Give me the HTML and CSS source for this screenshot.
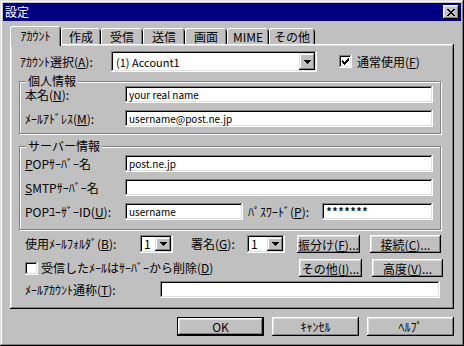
FILE: index.html
```html
<!DOCTYPE html>
<html lang="ja">
<head>
<meta charset="utf-8">
<title>設定</title>
<link rel="stylesheet" href="styles.css">
</head>
<body>
<div class="window">
  <div class="titlebar">
    <span class="title">設定</span>
    <span class="close"><svg width="8" height="7" viewBox="0 0 8 7" shape-rendering="crispEdges"><path d="M0 0h2v1h-2zM6 0h2v1h-2zM1 1h2v1h-2zM5 1h2v1h-2zM2 2h4v1h-4zM3 3h2v1h-2zM2 4h4v1h-4zM1 5h2v1h-2zM5 5h2v1h-2zM0 6h2v1h-2zM6 6h2v1h-2z" fill="#000"/></svg></span>
  </div>
  <div class="body">
    <div class="tabs">
      <div class="tab active">ｱｶｳﾝﾄ</div>
      <div class="tab w40">作成</div>
      <div class="tab w42">受信</div>
      <div class="tab w42">送信</div>
      <div class="tab w42">画面</div>
      <div class="tab w42">MIME</div>
      <div class="tab w46">その他</div>
    </div>
    <div class="panel">
      <div class="row row-acct">
        <span class="l-acct">ｱｶｳﾝﾄ選択(<u>A</u>):</span>
        <div class="combo c-acct"><span class="val">(1) Account1</span><span class="drop"><svg width="7" height="4" viewBox="0 0 7 4" shape-rendering="crispEdges"><path d="M0 0h7v1h-1v1h-1v1h-1v1h-1v-1h-1v-1h-1v-1h-1z" fill="#000"/></svg></span></div>
        <span class="check c-normal"><svg width="7" height="7" viewBox="0 0 7 7" shape-rendering="crispEdges"><path d="M6 0h1v1h-1zM5 1h2v1h-2zM0 2h1v1h-1zM4 2h3v1h-3zM0 3h2v1h-2zM3 3h3v1h-3zM0 4h5v1h-5zM1 5h3v1h-3zM2 6h1v1h-1z" fill="#000"/></svg></span>
        <span class="chklbl">通常使用(<u>F</u>)</span>
      </div>

      <div class="group g1">
        <span class="legend">個人情報</span>
        <div class="grow"><span class="glbl">本名(<u>N</u>):</span><div class="edit">your real name</div></div>
        <div class="grow"><span class="glbl">ﾒｰﾙｱﾄﾞﾚｽ(<u>M</u>):</span><div class="edit">username@post.ne.jp</div></div>
      </div>

      <div class="group g2">
        <span class="legend">サーバー情報</span>
        <div class="grow"><span class="glbl"><u>P</u>OPｻｰﾊﾞｰ名</span><div class="edit">post.ne.jp</div></div>
        <div class="grow"><span class="glbl"><u>S</u>MTPｻｰﾊﾞｰ名</span><div class="edit"></div></div>
        <div class="grow"><span class="glbl">POPﾕｰｻﾞｰID(<u>U</u>):</span><div class="edit e-user">username</div><span class="plbl">ﾊﾟｽﾜｰﾄﾞ(<u>P</u>):</span><div class="edit e-pass">*******</div></div>
      </div>

      <div class="row row-folder">
        <span class="l-folder">使用ﾒｰﾙﾌｫﾙﾀﾞ(<u>B</u>):</span>
        <div class="combo c-small c-folder"><span class="val">1</span><span class="drop"><svg width="7" height="4" viewBox="0 0 7 4" shape-rendering="crispEdges"><path d="M0 0h7v1h-1v1h-1v1h-1v1h-1v-1h-1v-1h-1v-1h-1z" fill="#000"/></svg></span></div>
        <span class="l-sign">署名(<u>G</u>):</span>
        <div class="combo c-small c-sign"><span class="val">1</span><span class="drop"><svg width="7" height="4" viewBox="0 0 7 4" shape-rendering="crispEdges"><path d="M0 0h7v1h-1v1h-1v1h-1v1h-1v-1h-1v-1h-1v-1h-1z" fill="#000"/></svg></span></div>
        <span class="btn b-left">振分け(<u>F</u>)...</span>
        <span class="btn b-right">接続(<u>C</u>)...</span>
      </div>

      <div class="row row-opts">
        <span class="check c-delete"></span>
        <span class="l-delete">受信したﾒｰﾙはｻｰﾊﾞｰから削除(<u>D</u>)</span>
        <span class="spacer"></span>
        <span class="btn b-left2">その他(<u>I</u>)...</span>
        <span class="btn b-right">高度(<u>V</u>)...</span>
      </div>

      <div class="row row-alias">
        <span class="l-alias">ﾒｰﾙｱｶｳﾝﾄ通称(<u>T</u>):</span>
        <div class="edit e-alias"></div>
      </div>
    </div>

    <div class="buttons">
      <span class="btn big default">OK</span>
      <span class="btn big">ｷｬﾝｾﾙ</span>
      <span class="btn big">ﾍﾙﾌﾟ</span>
    </div>
  </div>
</div>
</body>
</html>
```

FILE: styles.css
```css
html, body {
  margin: 0;
  padding: 0;
  background: #c0c0c0;
}
body {
  font: 12px/14px "Noto Sans CJK JP", "Noto Sans", sans-serif;
  color: #000;
}
u {
  text-decoration: underline;
  text-underline-offset: 1px;
}

.window {
  width: 464px;
  height: 346px;
  box-sizing: border-box;
  padding: 3px;
  background: #c0c0c0;
  box-shadow: inset -1px -1px #000, inset 1px 1px #dfdfdf, inset -2px -2px #808080, inset 2px 2px #fff;
  display: flex;
  flex-direction: column;
}

.titlebar {
  height: 18px;
  background: #000080;
  color: #fff;
  display: flex;
  align-items: center;
  padding: 0 2px;
}
.title {
  flex: 1;
}
.close {
  width: 16px;
  height: 14px;
  box-sizing: border-box;
  background: #c0c0c0;
  box-shadow: inset -1px -1px #000, inset 1px 1px #fff, inset -2px -2px #808080, inset 2px 2px #dfdfdf;
  display: flex;
  align-items: center;
  justify-content: center;
  padding-right: 1px;
}

.body {
  padding: 5px 7px 0 7px;
  display: flex;
  flex-direction: column;
}

.tabs {
  display: flex;
  align-items: flex-end;
  height: 20px;
  margin-bottom: -2px;
  position: relative;
  z-index: 1;
}
.tab {
  height: 16px;
  margin-bottom: 2px;
  box-sizing: border-box;
  display: flex;
  align-items: center;
  justify-content: center;
  background: #c0c0c0;
  border-radius: 3px 3px 0 0;
  box-shadow: inset 1px 0 #fff, inset 0 1px #fff, inset -1px 0 #000, inset -2px 0 #808080;
  padding-top: 1px;
}
.tab.active {
  width: 51px;
  height: 20px;
  margin-bottom: 0;
  padding-bottom: 2px;
}
.w40 { width: 40px; }
.w42 { width: 42px; }
.w46 { width: 46px; }

.panel {
  height: 265px;
  box-sizing: border-box;
  padding: 7px 11px 7px 9px;
  box-shadow: inset -1px -1px #000, inset 1px 1px #fff, inset -2px -2px #808080, inset 2px 2px #dfdfdf;
  display: flex;
  flex-direction: column;
}

.row {
  display: flex;
  align-items: center;
}
.row-acct {
  height: 21px;
}
.l-acct {
  width: 91px;
  margin-left: 1px;
}

.combo {
  box-sizing: border-box;
  background: #fff;
  box-shadow: inset -1px -1px #fff, inset 1px 1px #808080, inset -2px -2px #dfdfdf, inset 2px 2px #000;
  display: flex;
  align-items: stretch;
  padding: 2px;
}
.combo .val {
  flex: 1;
  padding-left: 2px;
  display: flex;
  align-items: center;
}
.c-acct .val {
  font-size: 11px;
  padding-left: 3px;
}
.drop {
  width: 16px;
  box-sizing: border-box;
  background: #c0c0c0;
  box-shadow: inset -1px -1px #000, inset 1px 1px #dfdfdf, inset -2px -2px #808080, inset 2px 2px #fff;
  display: flex;
  align-items: center;
  justify-content: center;
}
.c-acct {
  width: 206px;
  height: 21px;
}
.c-small {
  height: 18px;
}
.c-folder { width: 33px; }
.c-sign { width: 38px; }

.check {
  width: 13px;
  height: 13px;
  box-sizing: border-box;
  background: #fff;
  box-shadow: inset -1px -1px #fff, inset 1px 1px #808080, inset -2px -2px #dfdfdf, inset 2px 2px #000;
  display: flex;
  align-items: center;
  justify-content: center;
}
.c-normal {
  margin-left: 22px;
}
.chklbl {
  margin-left: 5px;
}

.group {
  position: relative;
  box-sizing: border-box;
  border: 1px solid #808080;
  box-shadow: 1px 1px 0 #fff, inset 1px 1px 0 #fff;
  margin-right: 2px;
  display: flex;
  flex-direction: column;
  gap: 7px;
}
.g1 {
  margin-top: 9px;
  padding: 4px 7px 6px 5px;
}
.g2 {
  margin-top: 12px;
  padding: 8px 7px 9px 5px;
}
.legend {
  position: absolute;
  top: -7px;
  left: 6px;
  padding: 0 2px;
  background: #c0c0c0;
  line-height: 12px;
}
.grow {
  display: flex;
  align-items: center;
  height: 17px;
}
.glbl {
  width: 100px;
  flex: none;
}
.edit {
  flex: 1;
  height: 17px;
  box-sizing: border-box;
  background: #fff;
  box-shadow: inset -1px -1px #fff, inset 1px 1px #808080, inset -2px -2px #dfdfdf, inset 2px 2px #000;
  padding: 1px 3px 0 4px;
  display: flex;
  align-items: center;
  white-space: nowrap;
  font-size: 10px;
  line-height: 12px;
}
.e-user {
  flex: none;
  width: 118px;
}
.e-pass {
  font-family: "Liberation Mono", monospace;
  font-size: 10px;
  font-weight: bold;
  padding-top: 3px;
}
.plbl {
  width: 74px;
  margin-left: 5px;
  flex: none;
}

.row-folder {
  margin-top: 5px;
  height: 18px;
}
.l-folder {
  margin-left: 6px;
  width: 115px;
}
.l-sign {
  margin-left: 18px;
  width: 56px;
}

.btn {
  box-sizing: border-box;
  height: 18px;
  background: #c0c0c0;
  box-shadow: inset -1px -1px #000, inset 1px 1px #fff, inset -2px -2px #808080, inset 2px 2px #dfdfdf;
  display: flex;
  align-items: center;
  justify-content: center;
  padding-top: 1px;
  white-space: nowrap;
}
.b-left {
  margin-left: 12px;
  width: 63px;
}
.b-left2 {
  width: 63px;
}
.b-right {
  margin-left: 10px;
  width: 71px;
}

.row-opts {
  margin-top: 6px;
  height: 18px;
}
.c-delete {
  margin-left: 6px;
}
.l-delete {
  margin-left: 3px;
}
.spacer {
  flex: 1;
}

.row-alias {
  margin-top: 4px;
  height: 17px;
}
.l-alias {
  margin-left: 6px;
  width: 135px;
}
.e-alias {
  flex: none;
  width: 280px;
}

.buttons {
  display: flex;
  justify-content: flex-end;
  gap: 8px;
  margin-top: 8px;
}
.btn.big {
  width: 87px;
  height: 19px;
}
.btn.default {
  border: 1px solid #000;
}
```
